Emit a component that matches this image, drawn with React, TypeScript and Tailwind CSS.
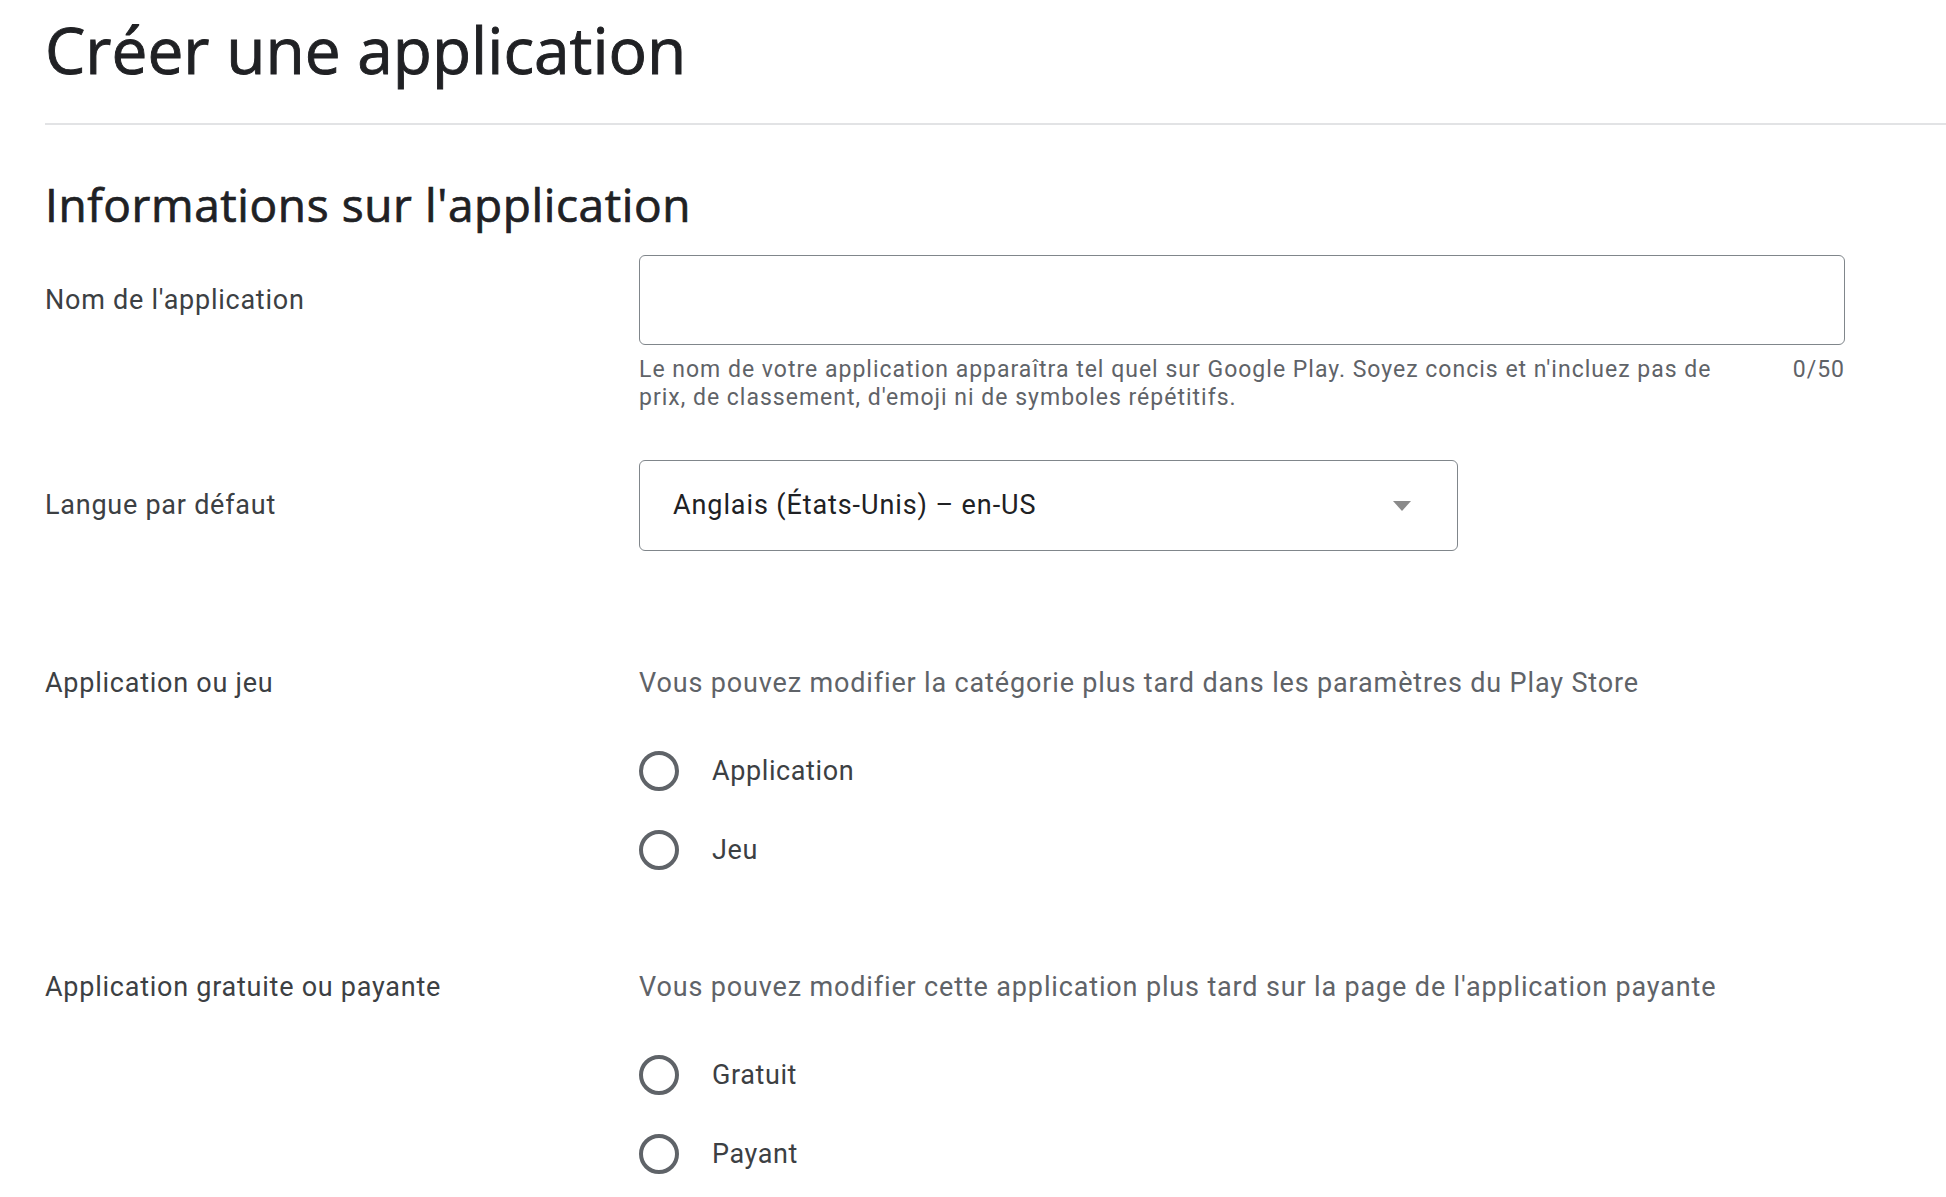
import React from "react";

const roboto = { fontFamily: "Roboto, 'Liberation Sans', sans-serif" };
const heading = { fontFamily: "'Open Sans', 'Noto Sans', sans-serif" };

function Radio({ label }: { label: string }) {
  return (
    <div className="flex h-[79px] items-center">
      <div className="h-[40px] w-[40px] rounded-full border-[4px] border-[#5f6368]" />
      <span className="ml-[33px] text-[27px] leading-[36px] tracking-[0.6px] text-[#3c4043]">{label}</span>
    </div>
  );
}

export default function App() {
  return (
    <div className="min-h-screen bg-white pl-[45px]" style={roboto}>
      <h1
        className="pt-[10px] text-[64px] leading-[80px] tracking-[0px] text-[#202124] [-webkit-text-stroke:0.9px_#202124]"
        style={heading}
      >
        Créer une application
      </h1>
      <div className="mt-[33px] h-[2px] bg-[#e2e3e5]" />
      <h2
        className="mt-[51px] text-[46px] leading-[56px] tracking-[0.6px] text-[#202124] [-webkit-text-stroke:0.7px_#202124]"
        style={heading}
      >
        Informations sur l'application
      </h2>

      {/* Nom */}
      <div className="mt-[23px] flex">
        <div className="flex h-[90px] w-[594px] shrink-0 items-center text-[27px] tracking-[0.75px] text-[#3c4043]">
          Nom de l'application
        </div>
        <div className="w-[1206px]">
          <div className="h-[90px] rounded-[6px] border-[1.5px] border-[#80868b]" />
          <div className="mt-[11px] flex justify-between text-[23px] leading-[28px] tracking-[1px] text-[#5f6368]">
            <div className="whitespace-nowrap">
              Le nom de votre application apparaîtra tel quel sur Google Play. Soyez concis et n'incluez pas de
              <br />
              prix, de classement, d'emoji ni de symboles répétitifs.
            </div>
            <div>0/50</div>
          </div>
        </div>
      </div>

      {/* Langue */}
      <div className="mt-[48px] flex">
        <div className="flex h-[91px] w-[594px] shrink-0 items-center text-[27px] tracking-[0.75px] text-[#3c4043]">
          Langue par défaut
        </div>
        <div className="flex h-[91px] w-[819px] items-center justify-between rounded-[6px] border-[1.5px] border-[#80868b] pl-[33px] pr-[46px]">
          <span className="text-[27px] tracking-[0.9px] text-[#202124]">Anglais (États-Unis) – en-US</span>
          <svg width="18" height="10" viewBox="0 0 18 10">
            <path d="M0 0 L18 0 L9 10 Z" fill="#8a8a8a" />
          </svg>
        </div>
      </div>

      {/* Application ou jeu */}
      <div className="mt-[114px] flex">
        <div className="w-[594px] shrink-0 text-[27px] leading-[36px] tracking-[0.75px] text-[#3c4043]">
          Application ou jeu
        </div>
        <div>
          <div className="text-[27px] leading-[36px] tracking-[0.85px] text-[#5f6368]">
            Vous pouvez modifier la catégorie plus tard dans les paramètres du Play Store
          </div>
          <div className="mt-[30px]">
            <Radio label="Application" />
            <Radio label="Jeu" />
          </div>
        </div>
      </div>

      {/* Gratuite ou payante */}
      <div className="mt-[80px] flex">
        <div className="w-[594px] shrink-0 text-[27px] leading-[36px] tracking-[0.75px] text-[#3c4043]">
          Application gratuite ou payante
        </div>
        <div>
          <div className="text-[27px] leading-[36px] tracking-[0.85px] text-[#5f6368]">
            Vous pouvez modifier cette application plus tard sur la page de l'application payante
          </div>
          <div className="mt-[30px]">
            <Radio label="Gratuit" />
            <Radio label="Payant" />
          </div>
        </div>
      </div>
    </div>
  );
}
